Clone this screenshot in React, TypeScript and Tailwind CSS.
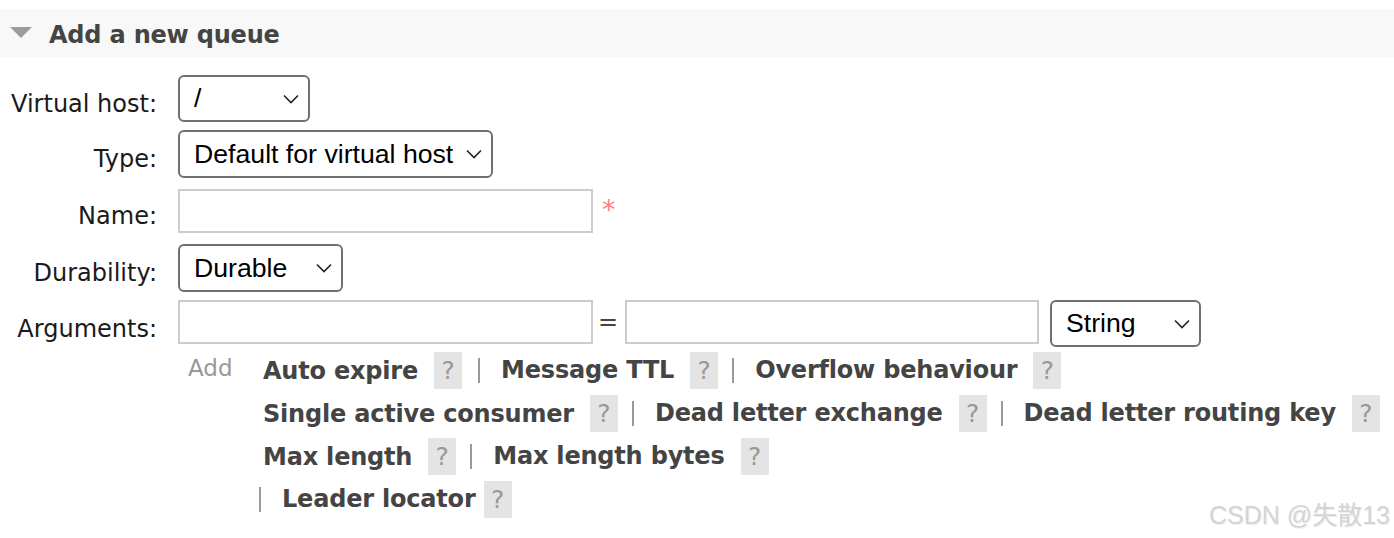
const label = "font-['DejaVu_Sans',sans-serif] text-[24px] leading-none text-[#1a1a1a] text-right w-[157px] pt-[10px]"
const selectText = "font-['Liberation_Sans',Arial,sans-serif] text-[26.67px] leading-none text-black"

const Chevron = () => (
	<svg width="16" height="10" viewBox="0 0 16 10" className="shrink-0">
		<path d="M1 1.5 L8 8.5 L15 1.5" fill="none" stroke="#222" strokeWidth="1.6" />
	</svg>
)

const Select = ({ value, className }: { value: string; className: string }) => (
	<div
		className={`flex items-center justify-between border-2 border-[#707070] rounded-[6px] pl-[14px] pr-[9px] bg-white ${className}`}
	>
		<span className={selectText}>{value}</span>
		<Chevron />
	</div>
)

const Input = ({ className }: { className: string }) => (
	<div className={`border-2 border-[#cccccc] bg-white h-[44px] ${className}`} />
)

const Help = () => (
	<span className="flex items-center justify-center w-[28px] h-[37px] bg-[#e4e4e4] text-[#999] font-['DejaVu_Sans',sans-serif] text-[25px] leading-none">
		?
	</span>
)

const Sep = () => <span className="block w-[2px] h-[25px] bg-[#9a9a9a]" />

const Arg = ({ children }: { children: string }) => (
	<span className="font-['DejaVu_Sans',sans-serif] font-bold text-[24px] leading-none tracking-[-0.2px] text-[#444]">
		{children}
	</span>
)

const App = () => {
	return (
		<div className="relative w-full h-[538px] bg-white pt-[9px] overflow-hidden">
			{/* Section header */}
			<div className="flex items-center h-[48px] bg-[#f8f8f8]">
				<svg width="22" height="12" viewBox="0 0 22 12" className="ml-[10px]">
					<polygon points="0,0 22,0 11,11" fill="#9c9c9c" />
				</svg>
				<h2 className="ml-[17px] font-['DejaVu_Sans',sans-serif] font-bold text-[24px] leading-none tracking-[-0.2px] text-[#444] pt-[3px]">
					Add a new queue
				</h2>
			</div>

			{/* Form */}
			<div className="flex flex-col mt-[18px]">
				<div className="flex items-center gap-[21px] h-[47px]">
					<span className={label}>Virtual host:</span>
					<Select value="/" className="w-[132px] h-[47px]" />
				</div>
				<div className="flex items-center gap-[21px] h-[48px] mt-[8px]">
					<span className={label}>Type:</span>
					<Select value="Default for virtual host" className="w-[315px] h-[48px]" />
				</div>
				<div className="flex items-center gap-[21px] h-[44px] mt-[11px]">
					<span className={label}>Name:</span>
					<div className="flex items-center">
						<Input className="w-[415px]" />
						<span className="ml-[9px] -mt-[4px] font-['DejaVu_Sans',sans-serif] text-[27px] leading-none text-[#ff8080]">
							*
						</span>
					</div>
				</div>
				<div className="flex items-center gap-[21px] h-[48px] mt-[11px]">
					<span className={label}>Durability:</span>
					<Select value="Durable" className="w-[165px] h-[48px]" />
				</div>
				<div className="flex items-center gap-[21px] h-[47px] mt-[8px]">
					<span className={label}>Arguments:</span>
					<div className="flex items-start h-[47px]">
						<Input className="w-[415px]" />
						<span className="ml-[5px] w-[20px] h-[44px] flex items-center justify-center font-['DejaVu_Sans',sans-serif] text-[24px] leading-none text-[#444]">
							=
						</span>
						<Input className="ml-[7px] w-[414px]" />
						<Select value="String" className="ml-[11px] w-[151px] h-[47px]" />
					</div>
				</div>

				{/* Argument shortcuts */}
				<div className="flex mt-[2px] ml-[188px]">
					<span className="w-[75px] h-[43px] flex items-center font-['DejaVu_Sans',sans-serif] text-[23px] leading-none text-[#999] -mt-[2px]">
						Add
					</span>
					<div className="flex flex-col">
						<div className="flex items-center h-[43px]">
							<Arg>Auto expire</Arg>
							<span className="ml-[16px]"><Help /></span>
							<span className="ml-[16px]"><Sep /></span>
							<span className="ml-[21px]"><Arg>Message TTL</Arg></span>
							<span className="ml-[16px]"><Help /></span>
							<span className="ml-[14px]"><Sep /></span>
							<span className="ml-[21px]"><Arg>Overflow behaviour</Arg></span>
							<span className="ml-[16px]"><Help /></span>
						</div>
						<div className="flex items-center h-[43px]">
							<Arg>Single active consumer</Arg>
							<span className="ml-[16px]"><Help /></span>
							<span className="ml-[14px]"><Sep /></span>
							<span className="ml-[21px]"><Arg>Dead letter exchange</Arg></span>
							<span className="ml-[16px]"><Help /></span>
							<span className="ml-[14px]"><Sep /></span>
							<span className="ml-[21px]"><Arg>Dead letter routing key</Arg></span>
							<span className="ml-[16px]"><Help /></span>
						</div>
						<div className="flex items-center h-[43px]">
							<Arg>Max length</Arg>
							<span className="ml-[16px]"><Help /></span>
							<span className="ml-[14px]"><Sep /></span>
							<span className="ml-[21px]"><Arg>Max length bytes</Arg></span>
							<span className="ml-[16px]"><Help /></span>
						</div>
						<div className="flex items-center h-[43px] -ml-[4px]">
							<Sep />
							<span className="ml-[21px]"><Arg>Leader locator</Arg></span>
							<span className="ml-[8px]"><Help /></span>
						</div>
					</div>
				</div>
			</div>

			{/* Watermark */}
			<span className="absolute right-[4px] bottom-[10px] font-['Liberation_Sans','Noto_Sans_CJK_SC',sans-serif] text-[25px] leading-none text-[#d4d4d4] [text-shadow:1px_1px_0_#eeeeee]">
				CSDN @失散13
			</span>
		</div>
	)
}

export default App
